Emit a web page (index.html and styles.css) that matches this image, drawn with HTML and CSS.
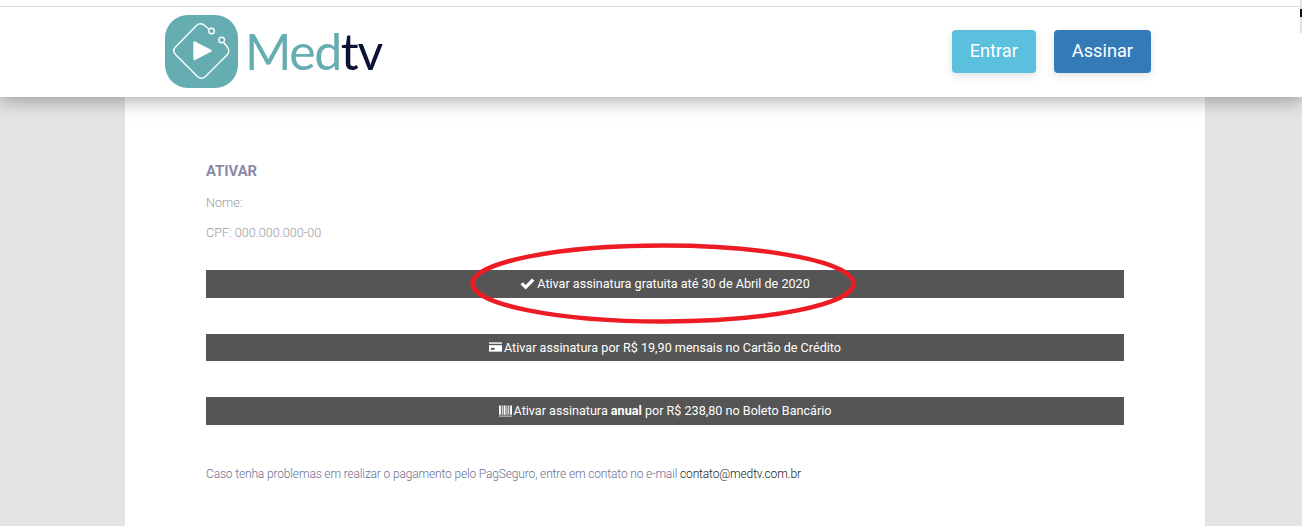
FILE: index.html

```html
<!DOCTYPE html>
<html>
<head>
    <title>Medtv - Ativar</title>
    <link rel="stylesheet" href="styles.css">
</head>
<body>
    <div class="top-strip"></div>
    <div class="window-edge"></div>

    <header class="site-header">
        <a class="logo" href="#">
            <svg class="logo-icon" viewBox="0 0 73 73" width="73" height="73">
                <rect width="73" height="73" rx="23" fill="#65adb1"/>
                <path d="M43.6 13.8 L39 10 Q35 7.4 31.5 10.5 L10.5 32 Q7 35.7 10.5 39.5 L32.5 61.5 Q36.5 65 40.5 61.5 L62 40 Q65.5 36 62 31.5 L58.7 27.5" fill="none" stroke="#fff" stroke-width="1.4"/>
                <circle cx="46.5" cy="16" r="2.8" fill="none" stroke="#fff" stroke-width="1.4"/>
                <circle cx="56.7" cy="25" r="2.8" fill="none" stroke="#fff" stroke-width="1.4"/>
                <path d="M29.5 27.5 L45.5 35.7 L29.5 44 Z" fill="#fff" stroke="#fff" stroke-width="2.4" stroke-linejoin="round"/>
            </svg>
            <span class="logo-text">Med<span class="logo-tv">tv</span></span>
        </a>
        <nav class="header-buttons">
            <a class="btn btn-enter" href="#">Entrar</a>
            <a class="btn btn-sign" href="#">Assinar</a>
        </nav>
    </header>

    <main class="content">
        <h2 class="title">ATIVAR</h2>
        <p class="field">Nome:</p>
        <p class="field">CPF: 000.000.000-00</p>

        <div class="options">
            <a class="option" href="#">
                <svg class="icon" viewBox="0 0 16 13" width="15" height="12">
                    <path d="M0.5 7 L3 4.5 L6 7.5 L13 0.5 L15.5 3 L6 12.5 Z" fill="#fff"/>
                </svg>
                <span>Ativar assinatura gratuita até 30 de Abril de 2020</span>
                <svg class="circle-mark" viewBox="0 0 386 82" width="386" height="82">
                    <ellipse cx="193" cy="40.5" rx="190.5" ry="38" fill="none" stroke="#ed1c24" stroke-width="4.5"/>
                </svg>
            </a>
            <a class="option" href="#">
                <svg class="icon" viewBox="0 0 14 10" width="13" height="10">
                    <path d="M0 0 H14 V10 H0 Z" fill="#fff"/>
                    <rect x="0" y="1.5" width="14" height="1.5" fill="#555"/>
                    <rect x="2" y="6" width="4" height="2" fill="#555"/>
                </svg>
                <span>Ativar assinatura por R$ 19,90 mensais no Cartão de Crédito</span>
            </a>
            <a class="option" href="#">
                <svg class="icon" viewBox="0 0 14 12" width="13" height="12">
                    <path d="M0 0 H2 V10 H0 Z M3 0 H4 V10 H3 Z M5 0 H7 V10 H5 Z M8 0 H9 V10 H8 Z M10 0 H11 V10 H10 Z M12 0 H14 V10 H12 Z" fill="#fff"/>
                    <path d="M0 11 H14 V12 H0 Z" fill="#fff" opacity="0.8"/>
                </svg>
                <span>Ativar assinatura <strong>anual</strong> por R$ 238,80 no Boleto Bancário</span>
            </a>
        </div>

        <p class="help">Caso tenha problemas em realizar o pagamento pelo PagSeguro, entre em contato no e-mail <a href="#">contato@medtv.com.br</a></p>
    </main>
</body>
</html>
```

FILE: styles.css

```css
* {
    box-sizing: border-box;
}

body {
    margin: 0;
    height: 526px;
    overflow: hidden;
    background-color: #e4e4e4;
    font-family: Roboto, "Liberation Sans", sans-serif;
}

a {
    text-decoration: none;
}

.top-strip {
    position: relative;
    z-index: 2;
    height: 7px;
    background-color: #fff;
    border-bottom: 1px solid #ddd;
}

.window-edge {
    position: absolute;
    z-index: 3;
    top: 0;
    right: 0;
    width: 2px;
    height: 33px;
    background-color: #dfe1e8;
}

.window-edge::after {
    content: "";
    position: absolute;
    top: 9px;
    left: 0;
    width: 2px;
    height: 8px;
    background-color: #111;
}

.site-header {
    position: relative;
    z-index: 1;
    display: flex;
    align-items: center;
    justify-content: space-between;
    height: 90px;
    padding: 0 151px 2px 165px;
    background-color: #fff;
    box-shadow: 0 3px 18px rgba(0, 0, 0, 0.35);
}

.logo {
    display: flex;
    align-items: center;
    gap: 7px;
}

.logo-text {
    font-family: Lato, sans-serif;
    font-size: 50px;
    line-height: 1;
    letter-spacing: -1.4px;
    color: #65adb1;
}

.logo-tv {
    color: #0e1136;
}

.header-buttons {
    display: flex;
    gap: 18px;
}

.btn {
    height: 43px;
    padding: 0 18px;
    border-radius: 4px;
    font-size: 18.2px;
    line-height: 41px;
    color: #fff;
    box-shadow: 0 3px 8px rgba(0, 0, 0, 0.12);
}

.btn-enter {
    background-color: #5bc0de;
}

.btn-sign {
    background-color: #337ab7;
}

.content {
    width: 1080px;
    height: 429px;
    margin-left: 125px;
    padding: 65px 81px 0;
    background-color: #fff;
}

.title {
    margin: 0 0 16px;
    font-size: 14.8px;
    line-height: 18px;
    font-weight: 700;
    color: #8a8aa8;
}

.field {
    margin: 0 0 16px;
    font-size: 12.6px;
    line-height: 14px;
    font-weight: 300;
    color: #a09a98;
}

.options {
    display: flex;
    flex-direction: column;
    gap: 36px;
    margin-top: 30px;
}

.option {
    position: relative;
    display: flex;
    align-items: center;
    justify-content: center;
    gap: 2px;
    height: 27.6px;
    background-color: #555;
    font-size: 12.6px;
    color: #fff;
}

.icon {
    flex-shrink: 0;
}

.circle-mark {
    position: absolute;
    top: -27px;
    left: 264px;
}

.help {
    margin: 42px 0 0;
    font-size: 12px;
    line-height: 14px;
    letter-spacing: -0.15px;
    font-weight: 300;
    color: #6a6f92;
}

.help a {
    color: #222;
}
```
